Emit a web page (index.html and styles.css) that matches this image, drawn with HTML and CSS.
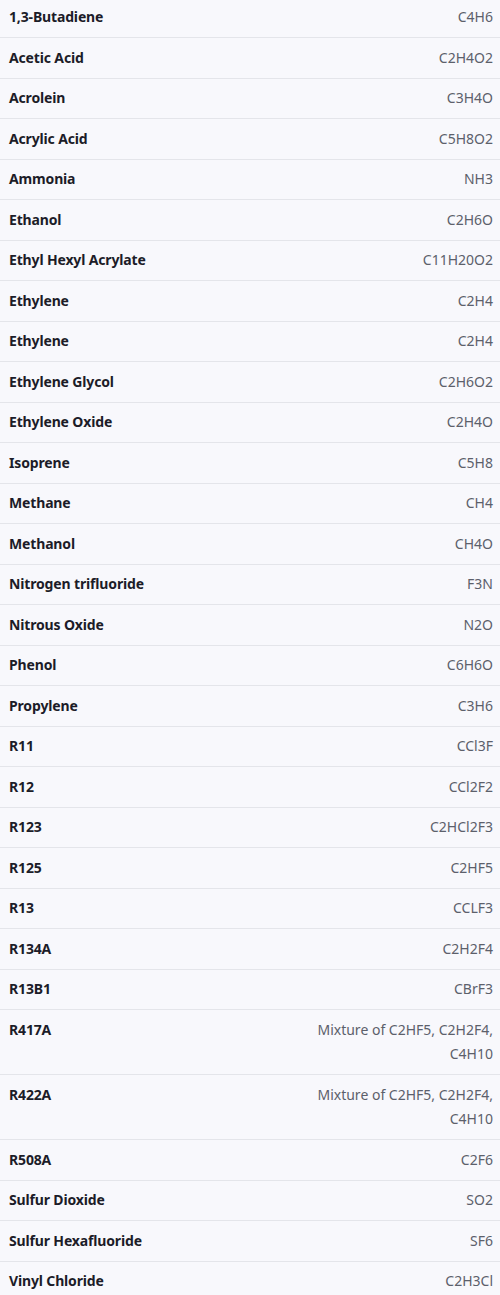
FILE: index.html
```html
<!DOCTYPE html>
<html>
<head>
<meta charset="utf-8">
<link rel="stylesheet" href="styles.css">
</head>
<body>
<table class="gases">
<tbody>
<tr><td class="name">1,3-Butadiene</td><td class="formula">C4H6</td></tr>
<tr><td class="name">Acetic Acid</td><td class="formula">C2H4O2</td></tr>
<tr><td class="name">Acrolein</td><td class="formula">C3H4O</td></tr>
<tr><td class="name">Acrylic Acid</td><td class="formula">C5H8O2</td></tr>
<tr><td class="name">Ammonia</td><td class="formula">NH3</td></tr>
<tr><td class="name">Ethanol</td><td class="formula">C2H6O</td></tr>
<tr><td class="name">Ethyl Hexyl Acrylate</td><td class="formula">C11H20O2</td></tr>
<tr><td class="name">Ethylene</td><td class="formula">C2H4</td></tr>
<tr><td class="name">Ethylene</td><td class="formula">C2H4</td></tr>
<tr><td class="name">Ethylene Glycol</td><td class="formula">C2H6O2</td></tr>
<tr><td class="name">Ethylene Oxide</td><td class="formula">C2H4O</td></tr>
<tr><td class="name">Isoprene</td><td class="formula">C5H8</td></tr>
<tr><td class="name">Methane</td><td class="formula">CH4</td></tr>
<tr><td class="name">Methanol</td><td class="formula">CH4O</td></tr>
<tr><td class="name">Nitrogen trifluoride</td><td class="formula">F3N</td></tr>
<tr><td class="name">Nitrous Oxide</td><td class="formula">N2O</td></tr>
<tr><td class="name">Phenol</td><td class="formula">C6H6O</td></tr>
<tr><td class="name">Propylene</td><td class="formula">C3H6</td></tr>
<tr><td class="name">R11</td><td class="formula">CCl3F</td></tr>
<tr><td class="name">R12</td><td class="formula">CCl2F2</td></tr>
<tr><td class="name">R123</td><td class="formula">C2HCl2F3</td></tr>
<tr><td class="name">R125</td><td class="formula">C2HF5</td></tr>
<tr><td class="name">R13</td><td class="formula">CCLF3</td></tr>
<tr><td class="name">R134A</td><td class="formula">C2H2F4</td></tr>
<tr><td class="name">R13B1</td><td class="formula">CBrF3</td></tr>
<tr><td class="name">R417A</td><td class="formula">Mixture of C2HF5, C2H2F4, C4H10</td></tr>
<tr><td class="name">R422A</td><td class="formula">Mixture of C2HF5, C2H2F4, C4H10</td></tr>
<tr><td class="name">R508A</td><td class="formula">C2F6</td></tr>
<tr><td class="name">Sulfur Dioxide</td><td class="formula">SO2</td></tr>
<tr><td class="name">Sulfur Hexafluoride</td><td class="formula">SF6</td></tr>
<tr><td class="name">Vinyl Chloride</td><td class="formula">C2H3Cl</td></tr>
</tbody>
</table>
</body>
</html>
```
FILE: styles.css
```css
html, body {
  margin: 0;
  padding: 0;
  background: #f8f8fc;
}
body {
  font-family: "Noto Sans", "DejaVu Sans", sans-serif;
  font-size: 14px;
}
.gases {
  width: 500px;
  border-collapse: collapse;
  margin-top: -2.5px;
}
.gases td {
  padding: 7.5px 7px 7.5px 9px;
  line-height: 24.5px;
  vertical-align: top;
  border-bottom: 1px solid #e4e5ea;
}
.gases tr:last-child td {
  border-bottom: none;
}
.name {
  font-weight: 700;
  letter-spacing: -0.15px;
  color: #1c1c28;
  text-align: left;
}
.formula {
  width: 184px;
  color: #5c606b;
  text-align: right;
}
```
